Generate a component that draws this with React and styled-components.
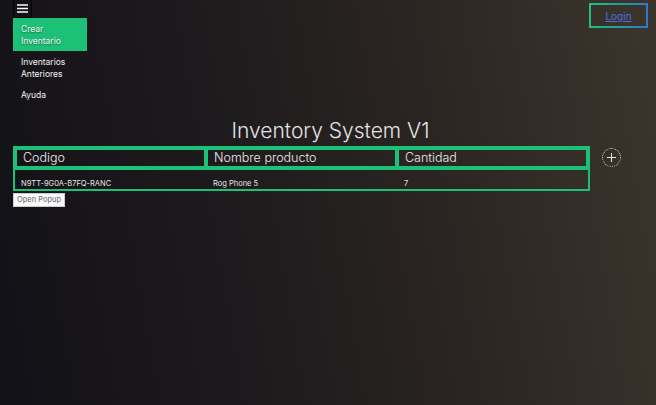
import styled, { createGlobalStyle } from "styled-components";

const GlobalStyle = createGlobalStyle`
  html, body {
    margin: 0;
    height: 100%;
  }
  body {
    font-family: Inter, "Noto Sans", sans-serif;
    background: linear-gradient(80deg, #121117 0%, #1d1a1d 35%, #2a2522 65%, #3c352d 100%);
    color: #e6e6e6;
    min-height: 405px;
  }
`;

const Page = styled.div`
  padding: 0 8px 0 13px;
`;

const TopBar = styled.header`
  display: flex;
  justify-content: space-between;
  align-items: flex-start;
`;

const Side = styled.div`
  display: flex;
  flex-direction: column;
  align-items: flex-start;
`;

const MenuButton = styled.button`
  width: 19px;
  height: 18px;
  padding: 0;
  display: flex;
  align-items: center;
  justify-content: center;
  background: #141217;
  border: 1px solid #050505;
  border-top: none;
  border-radius: 0 0 3px 3px;
  color: #fff;
`;

const Nav = styled.nav`
  display: flex;
  flex-direction: column;
  width: 74px;
`;

const NavItem = styled.a`
  display: block;
  padding: 5px 8px 4px;
  font-size: 8.5px;
  line-height: 12px;
  color: #f2f2f2;
  background: ${({ active }) => (active ? "#1cc077" : "transparent")};
  text-shadow: ${({ active }) => (active ? "0 1px 2px rgba(0,0,0,0.45)" : "none")};
`;

const LoginBox = styled.div`
  margin-top: 3px;
  width: 55px;
  height: 21px;
  display: flex;
  align-items: center;
  justify-content: center;
  border: 2px solid;
  border-image: linear-gradient(to right, #1fc176, #2a7ac8) 1;
`;

const LoginLink = styled.a`
  color: #4d6fe0;
  font-size: 10px;
  text-decoration: underline;
`;

const Title = styled.h1`
  margin: 11px 0 0;
  text-align: center;
  font-weight: 300;
  font-size: 21px;
  line-height: 30px;
  color: #e4e4e4;
`;

const TableRow = styled.div`
  display: flex;
  align-items: flex-start;
  gap: 12px;
`;

const Table = styled.div`
  width: 577px;
`;

const HeadRow = styled.div`
  display: grid;
  grid-template-columns: 191px 191px 191px;
  border: 2px solid #1cc077;
`;

const HeadCell = styled.div`
  border: 2px solid #1cc077;
  padding: 0 6px;
  height: 16px;
  font-size: 12.5px;
  font-weight: 300;
  line-height: 16px;
  color: #ececec;
`;

const DataRow = styled.div`
  display: grid;
  grid-template-columns: 191px 191px 191px;
  border: 2px solid #1cc077;
  border-top: none;
  height: 19px;
`;

const DataCell = styled.div`
  padding: 9px 0 0 ${({ pad }) => pad}px;
  font-size: 7.5px;
  line-height: 10px;
  color: #e6e6e6;
`;

const AddButton = styled.button`
  margin-top: 2px;
  width: 19px;
  height: 19px;
  padding: 0;
  border-radius: 50%;
  border: 1px dotted #cfcfcf;
  background: transparent;
  display: flex;
  align-items: center;
  justify-content: center;
`;

const PopupButton = styled.button`
  display: block;
  margin-top: 2px;
  padding: 1px 3px;
  background: #fafafa;
  border: 1px solid #ccc;
  color: #666;
  font-family: inherit;
  font-size: 7.5px;
  line-height: 10px;
`;

export default function App() {
  return (
    <Page>
      <GlobalStyle />
      <TopBar>
        <Side>
          <MenuButton aria-label="menu">
            <svg width="11" height="9" viewBox="0 0 11 9">
              <path d="M0 1h11M0 4.5h11M0 8h11" stroke="#fff" strokeWidth="1.4" />
            </svg>
          </MenuButton>
          <Nav>
            <NavItem active>Crear Inventario</NavItem>
            <NavItem>Inventarios Anteriores</NavItem>
            <NavItem>Ayuda</NavItem>
          </Nav>
        </Side>
        <LoginBox>
          <LoginLink href="#">Login</LoginLink>
        </LoginBox>
      </TopBar>
      <Title>Inventory System V1</Title>
      <TableRow>
        <Table>
          <HeadRow>
            <HeadCell>Codigo</HeadCell>
            <HeadCell>Nombre producto</HeadCell>
            <HeadCell>Cantidad</HeadCell>
          </HeadRow>
          <DataRow>
            <DataCell pad={6}>N9TT-9G0A-B7FQ-RANC</DataCell>
            <DataCell pad={7}>Rog Phone 5</DataCell>
            <DataCell pad={7}>7</DataCell>
          </DataRow>
        </Table>
        <AddButton aria-label="add">
          <svg width="11" height="11" viewBox="0 0 11 11">
            <path d="M5.5 1v9M1 5.5h9" stroke="#e8e8e8" strokeWidth="1.1" />
          </svg>
        </AddButton>
      </TableRow>
      <PopupButton>Open Popup</PopupButton>
    </Page>
  );
}
